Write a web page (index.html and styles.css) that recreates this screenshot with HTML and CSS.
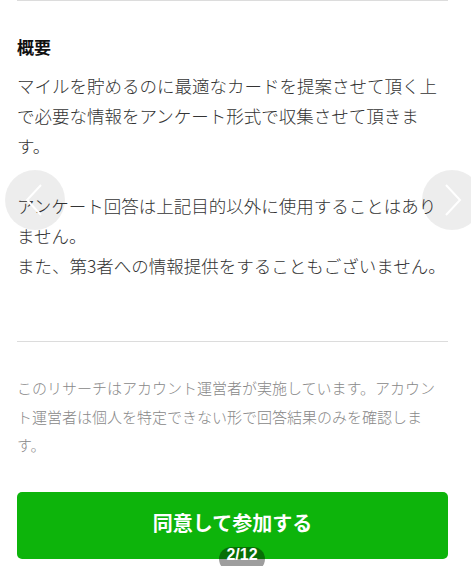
FILE: index.html
```html
<!DOCTYPE html>
<html lang="ja">
<head>
    <meta charset="UTF-8">
    <meta name="viewport" content="width=device-width, initial-scale=1.0">
    <title>リサーチ</title>
    <link rel="stylesheet" href="styles.css">
</head>
<body>
    <div id="slide">
        <div class="rule"></div>
        <h2 class="title">概要</h2>
        <p class="summary">マイルを貯めるのに最適なカードを提案させて頂く上で必要な情報をアンケート形式で収集させて頂きます。<br><br>アンケート回答は上記目的以外に使用することはありません。<br>また、第3者への情報提供をすることもございません。</p>
        <div class="rule lower"></div>
        <p class="notice">このリサーチはアカウント運営者が実施しています。アカウント運営者は個人を特定できない形で回答結果のみを確認します。</p>
        <button class="agree">同意して参加する</button>
    </div>

    <div class="nav prev">
        <svg width="60" height="60" viewBox="0 0 60 60"><path d="M36 15 L22 30 L36 45" fill="none" stroke="#fff" stroke-width="2"/></svg>
    </div>
    <div class="nav next">
        <svg width="60" height="60" viewBox="0 0 60 60"><path d="M24 15 L38 30 L24 45" fill="none" stroke="#fff" stroke-width="2"/></svg>
    </div>
    <div class="pager">2/12</div>
</body>
</html>
```

FILE: styles.css
```css
body {
    margin: 0;
    background-color: #fff;
    font-family: 'Noto Sans CJK JP', 'Noto Sans', sans-serif;
    color: #333;
    overflow: hidden;
}

#slide {
    padding: 0 23px 0 17px;
}

.rule {
    height: 1px;
    background-color: #dcdcdc;
}

.rule.lower {
    margin-top: 60px;
}

.title {
    margin: 34px 0 0;
    font-size: 17px;
    line-height: 24px;
    font-weight: bold;
    color: #111;
}

.summary {
    margin: 12px 0 0;
    font-size: 17.5px;
    line-height: 30px;
    font-weight: 300;
    color: #333;
}

.notice {
    margin: 32px 0 0;
    font-size: 15px;
    line-height: 28.5px;
    font-weight: 300;
    color: #888;
}

.agree {
    display: block;
    width: 100%;
    height: 67px;
    margin-top: 32px;
    padding: 0 0 5px;
    border: none;
    border-radius: 5px;
    background-color: #0db40b;
    color: #fff;
    font-family: inherit;
    font-size: 20px;
    font-weight: bold;
}

.nav {
    position: absolute;
    top: 170px;
    width: 60px;
    height: 60px;
    border-radius: 50%;
    background-color: rgba(0, 0, 0, 0.07);
}

.nav.prev {
    left: 5px;
}

.nav.next {
    left: 422px;
}

.pager {
    position: absolute;
    left: 219px;
    top: 547px;
    width: 46px;
    height: 24px;
    border-radius: 12px;
    background-color: rgba(0, 0, 0, 0.38);
    color: #fff;
    font-family: 'Liberation Sans', sans-serif;
    font-size: 16px;
    font-weight: bold;
    line-height: 16px;
    text-align: center;
}
```
